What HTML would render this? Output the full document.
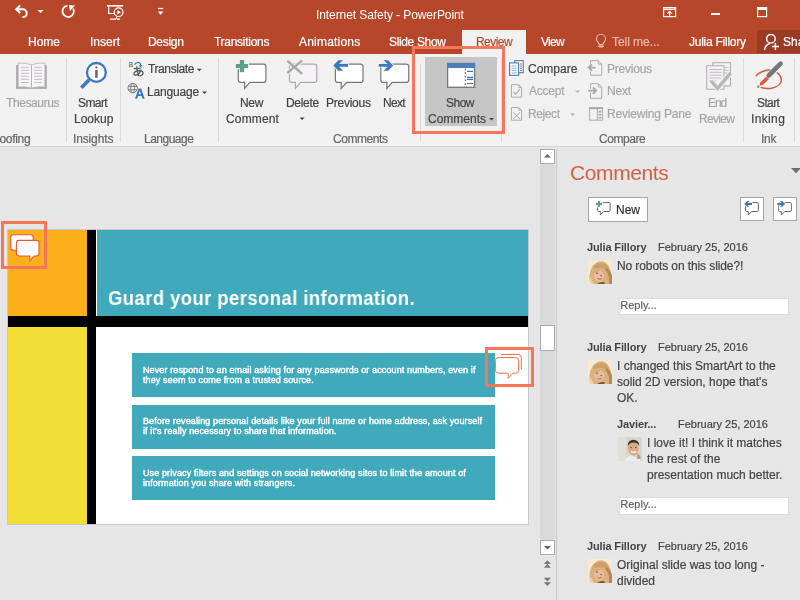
<!DOCTYPE html>
<html><head><meta charset="utf-8">
<style>
*{margin:0;padding:0;box-sizing:border-box}
html,body{width:800px;height:600px;overflow:hidden;background:#E6E6E6;font-family:"Liberation Sans",sans-serif}
.a,.tab,.rl,.gl,.ct,.cn,.cd,.reply{will-change:transform}
.tab,.rl,.gl,.ct,.cd,.reply{-webkit-text-stroke:0.2px currentColor}
.a{position:absolute;white-space:nowrap}
#title{position:absolute;left:0;top:0;width:800px;height:54px;background:#B7472A}
.tab{position:absolute;top:35px;font-size:12px;color:#fff;line-height:14px}
#ribbon{position:absolute;left:0;top:54px;width:800px;height:93px;background:#F1F1F1;border-bottom:1px solid #D5D5D5}
.rl{position:absolute;font-size:12px;color:#444;line-height:16px;white-space:nowrap}
.dis{color:#A6A6A6}
.gl{position:absolute;top:131.5px;font-size:12px;color:#666;line-height:14px;white-space:nowrap}
.sep{position:absolute;top:58px;width:1px;height:84px;background:#DADADA}
.redbox{position:absolute;border:3px solid #F4775C}
.st{font-size:9px;font-weight:normal;color:#fff;line-height:10px;letter-spacing:0.12px;-webkit-text-stroke:0.4px #fff}
.ct{position:absolute;font-size:12px;color:#444;line-height:16px;white-space:nowrap}
.cn{position:absolute;font-size:11px;font-weight:bold;color:#444;letter-spacing:-0.13px;line-height:14px;white-space:nowrap}
.cd{position:absolute;font-size:11px;color:#444;line-height:14px;white-space:nowrap}
.av{position:absolute;width:24px;height:24px;overflow:hidden}
.reply{position:absolute;background:#fff;font-size:11px;color:#625E70;line-height:12.5px;padding-left:0.3px;border:1px solid #DCDCDC}
</style></head><body>
<div id="title"></div>
<svg class="a" style="left:0;top:0" width="800" height="30" viewBox="0 0 800 30">
 <g fill="none" stroke="#fff" stroke-width="2" stroke-linecap="butt">
  <path d="M16.5 9.3 H22.8 A3.9 3.9 0 0 1 22.8 17.1 H22.5"/>
  <path d="M20.2 5.6 L16.2 9.3 L20.2 13" stroke-linejoin="miter"/>
  <path d="M67.4 5.6 A5.7 5.7 0 1 0 73.2 8.6" stroke-width="1.8"/>
 </g>
 <path d="M69 5 L75 5.6 L70 10.9 Z" fill="#fff"/>
 <path d="M37.5 10 H43.5 L40.5 13 Z" fill="#fff"/>
 <g fill="none" stroke="#fff" stroke-width="1.2">
  <path d="M107 5.8 H123.2" stroke-width="1.6"/>
  <path d="M108.7 6.5 V13.5 H114"/>
  <circle cx="118.6" cy="12.2" r="4.3"/>
  <path d="M110 19.2 H115.5 L117 17.5 M117 19.2 H120"/>
 </g>
 <path d="M117.3 9.9 L121 12.2 L117.3 14.5 Z" fill="#fff"/>
 <path d="M158 8.5 H163.2" stroke="#fff" stroke-width="1.2"/>
 <path d="M157.8 11.5 H163.4 L160.6 14.8 Z" fill="#fff"/>
 <g fill="none" stroke="#fff" stroke-width="1.2">
  <rect x="663.6" y="7.6" width="12" height="9"/>
  <path d="M663.6 9.3 H675.6" stroke-width="1.5"/>
  <path d="M669.6 16.6 V11.5 M667.4 13.6 L669.6 11.4 L671.8 13.6"/>
  <rect x="757.6" y="7.6" width="9" height="9"/>
  <path d="M757.6 9 H766.6" stroke-width="2"/>
 </g>
 <rect x="711" y="13" width="9" height="2" fill="#fff"/>
</svg>
<div class="a" style="left:316px;top:8px;font-size:12px;color:#fff;line-height:14px;letter-spacing:-0.08px">Internet Safety - PowerPoint</div>

<div class="tab" style="left:28px">Home</div>
<div class="tab" style="left:89.5px">Insert</div>
<div class="tab" style="left:148px;letter-spacing:-0.3px">Design</div>
<div class="tab" style="left:214px;letter-spacing:-0.28px">Transitions</div>
<div class="tab" style="left:299px;letter-spacing:0.2px">Animations</div>
<div class="tab" style="left:389px;letter-spacing:-0.35px">Slide Show</div>
<div style="position:absolute;left:462px;top:30px;width:64px;height:24px;background:#F1F1F1"></div>
<div class="tab" style="left:475.5px;color:#B7472A;letter-spacing:-0.55px">Review</div>
<div class="tab" style="left:541px;letter-spacing:-0.75px">View</div>
<div class="tab" style="left:612px;color:#EBB9AB;letter-spacing:-0.05px">Tell me...</div>
<div class="tab" style="left:689px;letter-spacing:-0.25px">Julia Fillory</div>
<div style="position:absolute;left:757px;top:30px;width:43px;height:23px;background:#9A3B24"></div>
<svg class="a" style="left:580px;top:28px" width="220" height="26" viewBox="580 28 220 26">
 <g fill="none" stroke="#EBB9AB" stroke-width="1.1">
  <path d="M599.2 44.6 C599 42.5 596.4 41.6 596.4 38.8 A4.6 4.6 0 0 1 605.6 38.8 C605.6 41.6 603 42.5 602.8 44.6 Z"/>
 </g>
 <path d="M598.4 45.4 H603.6 V46.6 L602.6 47.6 H599.4 L598.4 46.6 Z" fill="#EBB9AB"/>
 <g fill="none" stroke="#fff" stroke-width="1.45">
  <circle cx="770.9" cy="38.8" r="4.3"/>
  <path d="M764.6 49.8 A7.5 7.5 0 0 1 769.8 43.5"/>
  <path d="M772 46.4 H779 M775.4 43 V50"/>
 </g>
</svg>
<div class="tab" style="left:783px">Share</div>

<div id="ribbon"></div>
<div style="position:absolute;left:425px;top:57px;width:72px;height:69px;background:#C6C6C6"></div>
<div class="sep" style="left:66px"></div>
<div class="sep" style="left:120px"></div>
<div class="sep" style="left:218px"></div>
<div class="sep" style="left:420px;top:64px;height:77px"></div>
<div class="sep" style="left:501px"></div>
<div class="sep" style="left:743px"></div>
<div class="sep" style="left:794px"></div>
<svg class="a" style="left:0;top:54px" width="800" height="92" viewBox="0 54 800 92">
 <!-- thesaurus book -->
 <path d="M16.1 65.1 H46.8 V88.9 H16.1 Z" fill="#ABABAB"/>
 <path d="M18.2 63.1 Q25 62.6 31.5 64.8 Q38 62.6 44.9 63.1 V87 Q38 86.4 31.5 88 Q25 86.4 18.2 87 Z" fill="#F7F3F7" stroke="#B4B4B4" stroke-width="0.8"/>
 <path d="M31.5 64.8 V88" stroke="#B4B4B4" stroke-width="1"/>
 <g stroke="#B0B0B0" stroke-width="0.75">
  <path d="M21 67.3 H29 M21 70.3 H29 M21 73.3 H29 M21 76.3 H29 M21 79.3 H29 M21 82.5 H29"/>
  <path d="M34 67.3 H42 M34 70.3 H42 M34 73.3 H42 M34 76.3 H42 M34 79.3 H42 M34 82.5 H42"/>
 </g>
 <!-- smart lookup -->
 <path d="M89.2 79.8 L81.3 87.7" stroke="#3D78BF" stroke-width="3.6" stroke-linecap="butt"/>
 <circle cx="96.4" cy="72.4" r="9.4" fill="#fff" stroke="#3D78BF" stroke-width="2.3"/>
 <path d="M96.4 66 L97.8 67.4 L96.4 68.8 L95 67.4 Z" fill="#666"/>
 <rect x="95.2" y="69.9" width="2.4" height="7.9" fill="#666"/>
 <!-- translate -->
 <text x="128.6" y="66.5" font-family="Liberation Sans" font-size="8.2" fill="#555">a</text>
 <path d="M134.4 64.6 Q136.6 61.6 139.4 62.6 Q140.8 63.4 140.6 65.6" fill="none" stroke="#3D78BF" stroke-width="1.2"/>
 <path d="M138.6 64.9 L140.6 67.2 L142.6 64.9 Z" fill="#3D78BF"/>
 <g fill="none" stroke="#555" stroke-width="1.25" stroke-linecap="round">
  <path d="M134.2 68.6 Q137.6 68.8 141 68"/>
  <path d="M136.9 66.6 Q136.6 71.6 138.6 75.6"/>
  <path d="M140.9 70 Q139.6 74.6 136 75.2 Q133.6 75.4 133.9 73.4 Q134.6 70.8 139.4 70.6 Q143.2 70.8 143.1 73.2 Q142.8 75.4 140 75.8"/>
 </g>
 <!-- globe A -->
 <g fill="none" stroke="#6A6A6A" stroke-width="0.85">
  <circle cx="132.7" cy="88.1" r="4.7"/>
  <path d="M128.2 86.4 H137.2 M128.2 89.8 H137.2"/>
  <ellipse cx="132.7" cy="88.1" rx="1.9" ry="4.7"/>
 </g>
 <path d="M135 98.8 L138.6 88.6 H141.1 L144.7 98.8 H142.5 L141.6 96.1 H138.1 L137.2 98.8 Z M138.7 94.3 H141 L139.85 90.6 Z" fill="#3D78BF" stroke="#F1F1F1" stroke-width="0.6" fill-rule="evenodd" paint-order="stroke"/>
 <!-- new comment -->
 <path d="M240.8 64.1 H263.4 Q265.9 64.1 265.9 66.6 V79.9 Q265.9 82.4 263.4 82.4 H249.8 L244.6 88.4 V82.4 H240.8 Q238.3 82.4 238.3 79.9 V66.6 Q238.3 64.1 240.8 64.1 Z" fill="#fff" stroke="#777" stroke-width="1.2"/>
 <path d="M239.9 59.9 H244.1 V63.9 H248 V68.1 H244.1 V72 H239.9 V68.1 H235.9 V63.9 H239.9 Z" fill="#F1F1F1" stroke="#F1F1F1" stroke-width="1.8"/><path d="M239.9 59.9 H244.1 V63.9 H248 V68.1 H244.1 V72 H239.9 V68.1 H235.9 V63.9 H239.9 Z" fill="#5C9E89"/>
 <!-- delete -->
 <path d="M292 64.1 H314.3 Q316.8 64.1 316.8 66.6 V79.9 Q316.8 82.4 314.3 82.4 H300.6 L295.4 88.4 V82.4 H292 Q289.5 82.4 289.5 79.9 V66.6 Q289.5 64.1 292 64.1 Z" fill="#F6F1F6" stroke="#ABABAB" stroke-width="1.2"/>
 <path d="M288 61.4 L301.3 73.2 M301.3 61.2 L288 72.4" stroke="#F1F1F1" stroke-width="4.2" stroke-linecap="round"/>
 <path d="M288 61.4 L301.3 73.2 M301.3 61.2 L288 72.4" stroke="#A8A8A8" stroke-width="2.4" stroke-linecap="round"/>
 <!-- previous -->
 <path d="M337.9 64.1 H360.5 Q363 64.1 363 66.6 V79.9 Q363 82.4 360.5 82.4 H346.6 L341.2 88.4 V82.4 H337.9 Q335.4 82.4 335.4 79.9 V66.6 Q335.4 64.1 337.9 64.1 Z" fill="#fff" stroke="#777" stroke-width="1.2"/>
 <path d="M333.3 65.45 L338.4 60.2 H342.9 L339 64.1 H348 V66.8 H339 L342.9 70.7 H338.4 Z" fill="#F1F1F1" stroke="#F1F1F1" stroke-width="1.6"/><path d="M333.3 65.45 L338.4 60.2 H342.9 L339 64.1 H348 V66.8 H339 L342.9 70.7 H338.4 Z" fill="#3E79BE"/>
 <!-- next -->
 <path d="M383.3 64.1 H406.2 Q408.7 64.1 408.7 66.6 V79.9 Q408.7 82.4 406.2 82.4 H392.3 L386.9 88.4 V82.4 H383.3 Q380.8 82.4 380.8 79.9 V66.6 Q380.8 64.1 383.3 64.1 Z" fill="#fff" stroke="#777" stroke-width="1.2"/>
 <path d="M393.2 65.45 L388.1 60.2 H383.6 L387.5 64.1 H378.8 V66.8 H387.5 L383.6 70.7 H388.1 Z" fill="#F1F1F1" stroke="#F1F1F1" stroke-width="1.6"/><path d="M393.2 65.45 L388.1 60.2 H383.6 L387.5 64.1 H378.8 V66.8 H387.5 L383.6 70.7 H388.1 Z" fill="#3E79BE"/>
 <!-- show comments -->
 <rect x="447.6" y="63.5" width="27" height="23.8" fill="#fff" stroke="#777" stroke-width="1.3"/>
 <rect x="447" y="63" width="28" height="5" fill="#4A7FBC"/>
 <path d="M465.3 68.5 V87" stroke="#707070" stroke-width="1.1" stroke-dasharray="2 1.6"/>
 <g stroke="#3D78BF" stroke-width="1.1">
  <path d="M467 71.4 H473 M467 77.4 H473 M467 79.4 H473 M467 83.5 H473"/>
 </g>
 <!-- compare -->
 <rect x="514.8" y="60.7" width="8.4" height="12" fill="#fff" stroke="#666" stroke-width="1"/>
 <path d="M520 64 H522 M520 66.2 H522 M520 68.4 H522 M520 70.6 H522" stroke="#666" stroke-width="0.9"/>
 <rect x="509.6" y="62.9" width="9" height="12.4" fill="#fff" stroke="#3E79BE" stroke-width="1.1"/>
 <path d="M511.4 66 H516.8 M511.4 68.3 H516.8 M511.4 70.6 H516.8 M511.4 72.9 H516.8" stroke="#7FA8D8" stroke-width="0.9"/>
 <!-- accept / reject docs -->
 <path d="M511.5 84.7 H518.8 L521.6 87.5 V97.2 H511.5 Z" fill="#F5F0F5" stroke="#ABABAB" stroke-width="1"/>
 <path d="M518.8 84.7 V87.5 H521.6" fill="none" stroke="#ABABAB" stroke-width="0.9"/>
 <path d="M513.3 91.5 L515.6 94.3 L520 88.8" fill="none" stroke="#ABABAB" stroke-width="1.1"/>
 <path d="M511.5 107.5 H518.8 L521.6 110.3 V120.2 H511.5 Z" fill="#F5F0F5" stroke="#ABABAB" stroke-width="1"/>
 <path d="M518.8 107.5 V110.3 H521.6" fill="none" stroke="#ABABAB" stroke-width="0.9"/>
 <path d="M513.2 112.5 L520 119 M520 112.5 L513.2 119" fill="none" stroke="#ABABAB" stroke-width="1"/>
 <!-- compare prev / next docs -->
 <path d="M590.5 60.7 H598.3 L601.7 64.1 V75.2 H590.5 Z" fill="#F5F0F5" stroke="#ABABAB" stroke-width="1"/>
 <path d="M598.3 60.7 V64.1 H601.7" fill="none" stroke="#ABABAB" stroke-width="0.9"/>
 <path d="M591.8 64.4 L588.8 67.6 L591.8 70.8 M589.2 67.6 H595.6" fill="none" stroke="#F1F1F1" stroke-width="3.6"/><path d="M591.8 64.4 L588.8 67.6 L591.8 70.8 M589.2 67.6 H595.6" fill="none" stroke="#A8A8A8" stroke-width="1.9"/>
 <path d="M590.5 83.7 H598.3 L601.7 87.1 V98.3 H590.5 Z" fill="#F5F0F5" stroke="#ABABAB" stroke-width="1"/>
 <path d="M598.3 83.7 V87.1 H601.7" fill="none" stroke="#ABABAB" stroke-width="0.9"/>
 <path d="M593 87.4 L596 90.6 L593 93.8 M588.4 90.6 H595.6" fill="none" stroke="#F1F1F1" stroke-width="3.6"/><path d="M593 87.4 L596 90.6 L593 93.8 M588.4 90.6 H595.6" fill="none" stroke="#A8A8A8" stroke-width="1.9"/>
 <!-- reviewing pane -->
 <rect x="589.6" y="107.7" width="12.8" height="12.5" fill="#F5F0F5" stroke="#ABABAB" stroke-width="1"/>
 <rect x="589" y="107.2" width="14" height="2" fill="#ABABAB"/>
 <path d="M597.3 109 V120.2" stroke="#ABABAB" stroke-width="1"/>
 <rect x="598.6" y="110.8" width="2.6" height="1.8" fill="#ABABAB"/>
 <rect x="598.6" y="113.8" width="2.6" height="1.8" fill="#ABABAB"/>
 <rect x="598.6" y="116.8" width="2.6" height="1.8" fill="#ABABAB"/>
 <!-- end review -->
 <rect x="712.9" y="62.7" width="17.6" height="23.2" fill="#F5F0F5" stroke="#ABABAB" stroke-width="1"/>
 <path d="M725 67.5 H728.5 M725 70.3 H728.5 M725 73.1 H728.5 M725 75.9 H728.5" stroke="#B8B8B8" stroke-width="0.9"/>
 <rect x="706.7" y="65.7" width="17.3" height="23.5" fill="#F5F0F5" stroke="#ABABAB" stroke-width="1"/>
 <path d="M709.3 69.5 H721.5 M709.3 72.3 H721.5 M709.3 75.2 H721.5 M709.3 78 H721.5 M709.3 80.8 H716" stroke="#B8B8B8" stroke-width="0.9"/>
 <path d="M711.2 81 L717.6 88.4 L730.5 73.2" fill="none" stroke="#F1F1F1" stroke-width="5.4"/>
 <path d="M711.2 81 L717.6 88.4 L730.5 73.2" fill="none" stroke="#B7B7B7" stroke-width="3.4"/>
 <!-- start inking -->
 <path d="M756.3 75.6 Q761 70.8 769.4 69.8 M777.4 72.8 Q782 76.5 781.2 81.4 Q779.6 87 770.5 88.4 Q765 88.8 761.4 87.5" fill="none" stroke="#D95A3C" stroke-width="1.5" stroke-linecap="round"/>
 <path d="M780.6 63.7 L768.8 75.5" stroke="#777" stroke-width="4.6" stroke-linecap="round"/>
 <path d="M766.3 76.4 L769 79.1 L762.8 85.1 L759.6 85.7 L760.2 82.5 Z" fill="#D95A3C"/>
 <circle cx="758.2" cy="86.7" r="1.15" fill="#D95A3C"/>
</svg>
<!-- ribbon labels -->
<div class="rl dis" style="left:6px;top:94.5px;letter-spacing:-0.4px">Thesaurus</div>
<div class="rl" style="left:78.0px;top:94.5px;letter-spacing:-0.575px">Smart</div>
<div class="rl" style="left:73.8px;top:110.5px">Lookup</div>
<div class="rl" style="left:147.6px;top:60.8px;letter-spacing:-0.4px">Translate</div>
<div class="rl" style="left:146.6px;top:83.6px;letter-spacing:-0.186px">Language</div>
<div class="rl" style="left:240.0px;top:94.5px;letter-spacing:-0.35px">New</div>
<div class="rl" style="left:225.7px;top:110.5px;letter-spacing:0.15px">Comment</div>
<div class="rl" style="left:286.4px;top:94.5px;letter-spacing:-0.32px">Delete</div>
<div class="rl" style="left:326.0px;top:94.5px;letter-spacing:-0.257px">Previous</div>
<div class="rl" style="left:383.0px;top:94.5px;letter-spacing:-0.667px">Next</div>
<div class="rl" style="left:445.7px;top:94.5px;letter-spacing:-0.517px">Show</div>
<div class="rl" style="left:427.5px;top:110.5px">Comments</div>
<div class="rl" style="left:528px;top:60.5px;letter-spacing:0px">Compare</div>
<div class="rl dis" style="left:528.8px;top:83.3px;letter-spacing:-0.24px">Accept</div>
<div class="rl dis" style="left:528.0px;top:106.1px;letter-spacing:-0.4px">Reject</div>
<div class="rl dis" style="left:606.6px;top:60.5px;letter-spacing:-0.23px">Previous</div>
<div class="rl dis" style="left:606.6px;top:83.3px;letter-spacing:-0.17px">Next</div>
<div class="rl dis" style="left:606.6px;top:106.1px;letter-spacing:-0.18px">Reviewing Pane</div>
<div class="rl dis" style="left:708.4px;top:94.5px;letter-spacing:-1.1px">End</div>
<div class="rl dis" style="left:699.4px;top:110.5px;letter-spacing:-0.7px">Review</div>
<div class="rl" style="left:757.0px;top:94.5px;letter-spacing:-0.625px">Start</div>
<div class="rl" style="left:751.4px;top:110.5px;letter-spacing:0.36px">Inking</div>
<div class="gl" style="left:-12.5px;letter-spacing:-0.3px">Proofing</div>
<div class="gl" style="left:73px;letter-spacing:-0.14px">Insights</div>
<div class="gl" style="left:144.4px;letter-spacing:-0.5px">Language</div>
<div class="gl" style="left:333.4px;letter-spacing:-0.44px">Comments</div>
<div class="gl" style="left:599px;letter-spacing:-0.43px">Compare</div>
<div class="gl" style="left:760.5px;letter-spacing:-0.25px">Ink</div>
<svg class="a" style="left:0;top:54px" width="800" height="92" viewBox="0 54 800 92">
 <g fill="#444">
  <path d="M196.8 68.8 H201.7 L199.25 71.3 Z"/>
  <path d="M202 91.6 H207 L204.5 94.1 Z"/>
  <path d="M299.6 117.4 H304.6 L302.1 119.9 Z"/>
  <path d="M489 118 H494 L491.5 120.5 Z"/>
 </g>
 <g fill="#B0B0B0">
  <path d="M575 90.6 H580 L577.5 93.1 Z"/>
  <path d="M570 113.4 H575 L572.5 115.9 Z"/>
 </g>
</svg>

<div id="canvas"></div>
<!-- slide -->
<div style="position:absolute;left:7px;top:229px;width:522px;height:296px;background:#C9C9CB"></div>
<div style="position:absolute;left:8px;top:230px;width:520px;height:294px;background:#fff;overflow:hidden">
 <div style="position:absolute;left:0;top:0;width:79px;height:86px;background:#FBAF1B"></div>
 <div style="position:absolute;left:89px;top:0;width:431px;height:86px;background:#40AABC"></div>
 <div style="position:absolute;left:79px;top:0;width:9px;height:294px;background:#000"></div>
 <div style="position:absolute;left:0;top:86px;width:520px;height:11px;background:#000"></div>
 <div style="position:absolute;left:0;top:97px;width:79px;height:197px;background:#F3DD37"></div>
 <div style="position:absolute;left:124px;top:123px;width:363px;height:44px;background:#40AABC"></div>
 <div style="position:absolute;left:124px;top:175px;width:363px;height:43.5px;background:#40AABC"></div>
 <div style="position:absolute;left:124px;top:226px;width:363px;height:43.6px;background:#40AABC"></div>
</div>
<div class="a" style="left:107.8px;top:285.5px;font-size:20px;font-weight:bold;color:#fff;line-height:24px;letter-spacing:0.5px;transform:scaleX(0.92);transform-origin:0 0">Guard your personal information.</div>
<div class="a st" style="left:143px;top:364.6px">Never respond to an email asking for any passwords or account numbers, even if<br>they seem to come from a trusted source.</div>
<div class="a st" style="left:143px;top:415.6px">Before revealing personal details like your full name or home address, ask yourself<br>if it’s really necessary to share that information.</div>
<div class="a st" style="left:143px;top:468px">Use privacy filters and settings on social networking sites to limit the amount of<br>information you share with strangers.</div>
<!-- scrollbar -->
<svg class="a" style="left:0;top:220px" width="540" height="170" viewBox="0 220 540 170">
 <path d="M13.4 234.7 H30.5 Q33.2 234.7 33.2 237.4 V247.5 Q33.2 250.2 30.5 250.2 H13.4 Q10.7 250.2 10.7 247.5 V237.4 Q10.7 234.7 13.4 234.7 Z" fill="#fff" stroke="#E8573B" stroke-width="1.1"/>
 <path d="M19.1 240.4 H36.3 Q39 240.4 39 243.1 V253.3 Q39 256 36.3 256 H33.8 L29.8 260.8 V256 H19.1 Q16.4 256 16.4 253.3 V243.1 Q16.4 240.4 19.1 240.4 Z" fill="#fff" stroke="#E8573B" stroke-width="1.1"/>
 <path d="M501 354.5 H518.5 Q521.3 354.5 521.3 357.3 V369.5" fill="none" stroke="#F26E53" stroke-width="1"/>
 <path d="M498.2 357.6 H515.8 Q518.6 357.6 518.6 360.4 V370.4 Q518.6 373.2 515.8 373.2 H513 L508.2 378.4 V373.2 H498.2 Q495.4 373.2 495.4 370.4 V360.4 Q495.4 357.6 498.2 357.6 Z" fill="#fff" stroke="#F26E53" stroke-width="1"/>
</svg>
<div class="redbox" style="left:1px;top:221px;width:46px;height:48px"></div>
<div class="redbox" style="left:485px;top:347px;width:49px;height:40px"></div>
<div class="redbox" style="left:412px;top:46px;width:93px;height:88px"></div>

<div style="position:absolute;left:540px;top:149px;width:15px;height:406px;background:#DADADA"></div>
<div style="position:absolute;left:540px;top:149px;width:15px;height:15px;background:#fff;border:1px solid #ABABAB"></div>
<div style="position:absolute;left:540px;top:540px;width:15px;height:15px;background:#fff;border:1px solid #ABABAB"></div>
<div style="position:absolute;left:540px;top:325px;width:15px;height:26px;background:#fff;border:1px solid #ABABAB"></div>
<div style="position:absolute;left:540px;top:555px;width:15px;height:45px;background:#E6E6E6"></div>
<svg class="a" style="left:538px;top:147px" width="20" height="453" viewBox="538 147 20 453">
 <path d="M544 157.6 H551 L547.5 154 Z" fill="#666"/>
 <path d="M544 546 H551 L547.5 549.5 Z" fill="#666"/>
 <path d="M543.8 564 L547.4 560.2 L551 564 Z M543.8 567.7 L547.4 563.9 L551 567.7 Z" fill="#777"/>
 <path d="M543.8 577.7 L547.4 581.5 L551 577.7 Z M543.8 582.2 L547.4 586 L551 582.2 Z" fill="#777"/>
</svg>
<div style="position:absolute;left:556px;top:149px;width:1px;height:451px;background:#C6C6C6"></div>


<!-- comments pane -->
<div class="a" style="left:570px;top:160.9px;font-size:21px;color:#D24726;line-height:24px;letter-spacing:-0.4px;opacity:0.85">Comments</div>
<svg class="a" style="left:786px;top:164px" width="14" height="12" viewBox="786 164 14 12"><path d="M791 168 H801 L796 173.2 Z" fill="#6E6E6E"/></svg>
<div style="position:absolute;left:588px;top:197px;width:60px;height:25px;background:#fff;border:1px solid #A6A6A6"></div>
<div class="ct" style="left:615.7px;top:201.8px;color:#333">New</div>
<div style="position:absolute;left:740px;top:197px;width:24px;height:24px;background:#fff;border:1px solid #A6A6A6"></div>
<div style="position:absolute;left:773px;top:197px;width:24px;height:24px;background:#fff;border:1px solid #A6A6A6"></div>
<svg class="a" style="left:586px;top:194px" width="214" height="30" viewBox="586 194 214 30">
 <path d="M598.6 202.6 H609.1 Q610.1 202.6 610.1 203.6 V210.5 Q610.1 211.5 609.1 211.5 H603.6 L600.3 215 V211.5 H598.6 Q597.6 211.5 597.6 210.5 V203.6 Q597.6 202.6 598.6 202.6 Z" fill="#fff" stroke="#666" stroke-width="1"/>
 <path d="M597.9 201 H600.1 V202.9 H602.1 V205.1 H600.1 V207 H597.9 V205.1 H595.9 V202.9 H597.9 Z" fill="#fff" stroke="#fff" stroke-width="1.4"/><path d="M597.9 201 H600.1 V202.9 H602.1 V205.1 H600.1 V207 H597.9 V205.1 H595.9 V202.9 H597.9 Z" fill="#5C9E89"/>
 <path d="M746.6 202.6 H757.3 Q758.3 202.6 758.3 203.6 V210.5 Q758.3 211.5 757.3 211.5 H751.6 L748.3 215 V211.5 H746.6 Q745.6 211.5 745.6 210.5 V203.6 Q745.6 202.6 746.6 202.6 Z" fill="#fff" stroke="#666" stroke-width="1"/>
 <path d="M744.2 203.9 L747.1 201 H749.5 L747.5 203 H752 V204.9 H747.5 L749.5 206.8 H747.1 Z" fill="#fff" stroke="#fff" stroke-width="1.4"/><path d="M744.2 203.9 L747.1 201 H749.5 L747.5 203 H752 V204.9 H747.5 L749.5 206.8 H747.1 Z" fill="#3E79BE"/>
 <path d="M779.6 202.6 H790.3 Q791.3 202.6 791.3 203.6 V210.5 Q791.3 211.5 790.3 211.5 H784.6 L781.3 215 V211.5 H779.6 Q778.6 211.5 778.6 210.5 V203.6 Q778.6 202.6 779.6 202.6 Z" fill="#fff" stroke="#666" stroke-width="1"/>
 <path d="M785.1 203.9 L782.2 201 H779.8 L781.8 203 H777.3 V204.9 H781.8 L779.8 206.8 H782.2 Z" fill="#fff" stroke="#fff" stroke-width="1.4"/><path d="M785.1 203.9 L782.2 201 H779.8 L781.8 203 H777.3 V204.9 H781.8 L779.8 206.8 H782.2 Z" fill="#3E79BE"/>
</svg>

<div class="cn" style="left:587.2px;top:239.7px">Julia Fillory</div>
<div class="cd" style="left:657.5px;top:239.7px">February 25, 2016</div>
<div class="av f" style="left:588px;top:260px"><svg width="24" height="24" viewBox="0 0 24 24"><defs><filter id="jf1" x="-20%" y="-20%" width="140%" height="140%"><feGaussianBlur stdDeviation="0.6"/></filter></defs>
<rect width="24" height="24" fill="#F7E9D4"/>
<g filter="url(#jf1)">
<path d="M2 24 Q0 14 4 7 Q9 0 15 1.5 Q21 3.5 22.5 11 Q24 17 24 24 Z" fill="#D9B27E"/>
<path d="M5 6 Q11 1 18 4 Q21 8 21 12 Q15 6 7 9 Z" fill="#CDA06A"/>
<path d="M17 10 Q22 14 21 24 H24 V16 Q23 11 19 8 Z" fill="#B78856"/>
<ellipse cx="11" cy="15.5" rx="5" ry="5.8" fill="#E9BCA2" transform="rotate(-25 11 15.5)"/>
<path d="M6.5 11.5 Q10 9 13 10 Q9 12 6.8 14 Z" fill="#D2A672"/>
<path d="M8.2 13.4 L10 13 M12.5 15.6 L14 15.6" stroke="#6E4838" stroke-width="0.9"/>
<path d="M9.6 18.6 Q11.5 19.8 13.6 18.6" stroke="#9A5A48" stroke-width="0.9" fill="none"/>
<path d="M2 17 Q4 21 6 24 H2 Z" fill="#E9D2B2"/>
<path d="M9 24 Q12 21.5 16 22 Q17 23 16.5 24 Z" fill="#7C5238"/>
</g></svg></div>
<div class="ct" style="left:617.2px;top:257.6px;letter-spacing:-0.1px">No robots on this slide?!</div>
<div class="reply" style="left:618.5px;top:297.5px;width:170px;height:17px">Reply...</div>

<div class="cn" style="left:587.2px;top:339.7px">Julia Fillory</div>
<div class="cd" style="left:657.5px;top:339.7px">February 25, 2016</div>
<div class="av f" style="left:588px;top:360px"><svg width="24" height="24" viewBox="0 0 24 24"><defs><filter id="jf2" x="-20%" y="-20%" width="140%" height="140%"><feGaussianBlur stdDeviation="0.6"/></filter></defs>
<rect width="24" height="24" fill="#F7E9D4"/>
<g filter="url(#jf2)">
<path d="M2 24 Q0 14 4 7 Q9 0 15 1.5 Q21 3.5 22.5 11 Q24 17 24 24 Z" fill="#D9B27E"/>
<path d="M5 6 Q11 1 18 4 Q21 8 21 12 Q15 6 7 9 Z" fill="#CDA06A"/>
<path d="M17 10 Q22 14 21 24 H24 V16 Q23 11 19 8 Z" fill="#B78856"/>
<ellipse cx="11" cy="15.5" rx="5" ry="5.8" fill="#E9BCA2" transform="rotate(-25 11 15.5)"/>
<path d="M6.5 11.5 Q10 9 13 10 Q9 12 6.8 14 Z" fill="#D2A672"/>
<path d="M8.2 13.4 L10 13 M12.5 15.6 L14 15.6" stroke="#6E4838" stroke-width="0.9"/>
<path d="M9.6 18.6 Q11.5 19.8 13.6 18.6" stroke="#9A5A48" stroke-width="0.9" fill="none"/>
<path d="M2 17 Q4 21 6 24 H2 Z" fill="#E9D2B2"/>
<path d="M9 24 Q12 21.5 16 22 Q17 23 16.5 24 Z" fill="#7C5238"/>
</g></svg></div>
<div class="ct" style="left:617.2px;top:357.6px">I changed this SmartArt to the<br>solid 2D version, hope that's<br>OK.</div>

<div class="cn" style="left:617.4px;top:416.8px">Javier...</div>
<div class="cd" style="left:677.5px;top:416.8px">February 25, 2016</div>
<div class="av m" style="left:618px;top:437px"><svg width="24" height="24" viewBox="0 0 24 24"><defs><filter id="bl2" x="-20%" y="-20%" width="140%" height="140%"><feGaussianBlur stdDeviation="0.6"/></filter></defs>
<rect width="24" height="24" fill="#D9D6CF"/>
<g filter="url(#bl2)">
<rect x="0" y="0" width="8" height="24" fill="#E2DFD8"/>
<ellipse cx="15.2" cy="11.5" rx="5.4" ry="7" fill="#D9AA8A" transform="rotate(-10 15.2 11.5)"/>
<path d="M9.6 9 Q10 2.8 15.5 2.8 Q21 3 21.4 9 Q19 5.5 15.5 5.6 Q12 5.6 9.6 9 Z" fill="#3E3028"/>
<path d="M13 14.5 Q15.6 16.2 18.4 14.5" stroke="#fff" stroke-width="1.3" fill="none"/>
<path d="M12.3 10.5 H13.8 M17 10.5 H18.6" stroke="#5A4030" stroke-width="0.9"/>
<path d="M7 24 Q9 18 13 18.5 L18 21 Q21 19 22 17 V24 Z" fill="#E9EEF6"/>
<path d="M19.5 16 L22.5 19 V22 H19 Z" fill="#C8957A"/>
</g></svg></div>
<div class="ct" style="left:647.3px;top:434.5px">I love it! I think it matches<br>the rest of the<br>presentation much better.</div>
<div class="reply" style="left:618.5px;top:496.5px;width:170px;height:17.5px">Reply...</div>

<div class="cn" style="left:587.2px;top:538.8px">Julia Fillory</div>
<div class="cd" style="left:657.5px;top:538.8px">February 25, 2016</div>
<div class="av f" style="left:588px;top:559px"><svg width="24" height="24" viewBox="0 0 24 24"><defs><filter id="jf3" x="-20%" y="-20%" width="140%" height="140%"><feGaussianBlur stdDeviation="0.6"/></filter></defs>
<rect width="24" height="24" fill="#F7E9D4"/>
<g filter="url(#jf3)">
<path d="M2 24 Q0 14 4 7 Q9 0 15 1.5 Q21 3.5 22.5 11 Q24 17 24 24 Z" fill="#D9B27E"/>
<path d="M5 6 Q11 1 18 4 Q21 8 21 12 Q15 6 7 9 Z" fill="#CDA06A"/>
<path d="M17 10 Q22 14 21 24 H24 V16 Q23 11 19 8 Z" fill="#B78856"/>
<ellipse cx="11" cy="15.5" rx="5" ry="5.8" fill="#E9BCA2" transform="rotate(-25 11 15.5)"/>
<path d="M6.5 11.5 Q10 9 13 10 Q9 12 6.8 14 Z" fill="#D2A672"/>
<path d="M8.2 13.4 L10 13 M12.5 15.6 L14 15.6" stroke="#6E4838" stroke-width="0.9"/>
<path d="M9.6 18.6 Q11.5 19.8 13.6 18.6" stroke="#9A5A48" stroke-width="0.9" fill="none"/>
<path d="M2 17 Q4 21 6 24 H2 Z" fill="#E9D2B2"/>
<path d="M9 24 Q12 21.5 16 22 Q17 23 16.5 24 Z" fill="#7C5238"/>
</g></svg></div>
<div class="ct" style="left:617.2px;top:556.8px">Original slide was too long -<br>divided</div>
</body></html>
